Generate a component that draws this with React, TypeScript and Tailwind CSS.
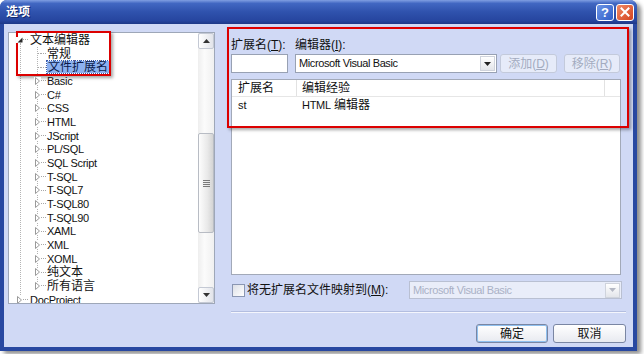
import React from 'react';

const kids = ['Basic', 'C#', 'CSS', 'HTML', 'JScript', 'PL/SQL', 'SQL Script', 'T-SQL', 'T-SQL7', 'T-SQL80', 'T-SQL90', 'XAML', 'XML', 'XOML', '纯文本', '所有语言'];

type Item = { t: string; lvl: 0 | 1; exp?: 'open' | 'closed'; sel?: boolean };

const items: Item[] = [
  { t: '文本编辑器', lvl: 0, exp: 'open' },
  { t: '常规', lvl: 1 },
  { t: '文件扩展名', lvl: 1, sel: true },
  ...kids.map((k) => ({ t: k, lvl: 1 as const, exp: 'closed' as const })),
  { t: 'DocProject', lvl: 0, exp: 'closed' },
];

const isCJK = (s: string) => /[\u4e00-\u9fff]/.test(s);

function Tri({ open }: { open?: boolean }) {
  return open ? (
    <svg width="6" height="6" viewBox="0 0 6 6">
      <path d="M5.5 0.5 L5.5 5.5 L0.5 5.5 Z" fill="#2a2a2a" />
    </svg>
  ) : (
    <svg width="5" height="8" viewBox="0 0 5 8">
      <path d="M0.5 0.5 L4.5 4 L0.5 7.5 Z" fill="white" stroke="#9a9a9a" strokeWidth="1" />
    </svg>
  );
}

function Row({ it }: { it: Item }) {
  const cjk = isCJK(it.t);
  return (
    <div className={`flex items-center h-[13.68px] shrink-0 ${it.lvl === 0 ? 'pl-[7px]' : 'pl-[25px]'}`}>
      <span className="w-[7px] h-full flex items-center justify-end relative z-10">
        {it.exp ? (
          <span className="w-[7px] flex items-center justify-center bg-white">
            <Tri open={it.exp === 'open'} />
          </span>
        ) : (
          <span className="w-[3px] border-t border-dotted border-[#a8a8a8]" />
        )}
      </span>
      <span className="w-[5px] border-t border-dotted border-[#a8a8a8]" />
      <span
        className={`whitespace-nowrap leading-[12px] ${it.lvl === 0 ? 'ml-[2px]' : 'ml-[1px]'} ${
          cjk ? 'text-[12px]' : 'text-[11px] tracking-[-0.3px]'
        } ${it.sel ? 'bg-[#8cb1f0] outline outline-1 outline-dotted outline-[#3b5aa8] px-[1px] text-[#0b1a4a]' : 'text-[#111]'}`}
      >
        {it.t}
      </span>
    </div>
  );
}

function ScrollArrow({ up }: { up?: boolean }) {
  return (
    <div className="h-[16px] w-[16px] shrink-0 flex items-center justify-center border border-[#c4c9d4] rounded-[2px] bg-[linear-gradient(to_right,#ffffff,#e2e4ea)]">
      <svg width="7" height="4" viewBox="0 0 7 4">
        {up ? <path d="M0 4 L3.5 0 L7 4 Z" fill="#333" /> : <path d="M0 0 L3.5 4 L7 0 Z" fill="#333" />}
      </svg>
    </div>
  );
}

function Tree() {
  return (
    <div className="w-[207px] h-[272px] border border-[#9ea7b8] bg-white flex shrink-0">
      <div className="flex-1 relative overflow-hidden">
        <div className="absolute left-[11px] top-[10px] bottom-0 border-l border-dotted border-[#b4b4b4]" />
        <div className="absolute left-[28px] top-[14px] h-[239px] border-l border-dotted border-[#b4b4b4]" />
        <div className="flex flex-col relative">
          {items.map((it, i) => (
            <Row key={i} it={it} />
          ))}
        </div>
      </div>
      <div className="w-[16px] flex flex-col bg-[linear-gradient(to_right,#eeeeee,#fbfbfb_40%,#f0f0f0)]">
        <ScrollArrow up />
        <div className="flex-1 relative flex flex-col">
          <div className="mt-[84px] h-[100px] w-[16px] border border-[#b8bcc4] rounded-[2px] bg-[linear-gradient(to_right,#fdfdfd,#e9e9e9_60%,#d4d4d4)] flex flex-col items-center justify-center gap-[1px]">
            <div className="w-[7px] h-[1px] bg-[#7a7a7a]" />
            <div className="w-[7px] h-[1px] bg-[#7a7a7a]" />
            <div className="w-[7px] h-[1px] bg-[#7a7a7a]" />
            <div className="w-[7px] h-[1px] bg-[#7a7a7a]" />
          </div>
        </div>
        <ScrollArrow />
      </div>
    </div>
  );
}

function DropBtn({ disabled }: { disabled?: boolean }) {
  return (
    <div className="w-[15px] h-[15px] mr-[1px] shrink-0 flex items-center justify-center border border-[#cfd3dc] bg-[linear-gradient(to_bottom,#ffffff,#e3e5ea)]">
      <svg width="7" height="4" viewBox="0 0 7 4">
        <path d="M0 0 L3.5 4 L7 0 Z" fill={disabled ? '#b4b8c4' : '#222'} />
      </svg>
    </div>
  );
}

function Right() {
  return (
    <div className="ml-[16px] w-[395px] flex flex-col pt-[6px]">
      <div className="flex h-[14px] items-center text-[12px] text-[#111]">
        <span className="w-[64px]">
          扩展名(<span className="underline">T</span>):
        </span>
        <span>
          编辑器(<span className="underline">I</span>):
        </span>
      </div>
      <div className="mt-[2px] flex h-[19px]">
        <div className="w-[57px] h-[19px] border border-[#98a1b3] bg-white" />
        <div className="ml-[7px] w-[202px] h-[19px] border border-[#98a1b3] bg-white flex items-center">
          <span className="flex-1 pl-[3px] text-[11px] tracking-[-0.4px] text-[#111]">Microsoft Visual Basic</span>
          <DropBtn />
        </div>
        <div className="ml-[3px] w-[57px] h-[19px] border border-[#c3cadb] rounded-[3px] bg-[#e6ebf9] flex items-center justify-center text-[12px] text-[#a3abc0]">
          添加(<span className="underline">D</span>)
        </div>
        <div className="ml-[7px] w-[56px] h-[19px] border border-[#c3cadb] rounded-[3px] bg-[#e6ebf9] flex items-center justify-center text-[12px] text-[#a3abc0]">
          移除(<span className="underline">R</span>)
        </div>
      </div>
      <div className="mt-[6px] w-[390px] h-[196px] border border-[#a2a9b8] bg-white flex flex-col">
        <div className="h-[17px] flex border-b border-[#e6e6e6] text-[12px] text-[#111]">
          <div className="w-[65px] pl-[6px] border-r border-[#e2e2e2] flex items-center">扩展名</div>
          <div className="w-[308px] pl-[5px] border-r border-[#e2e2e2] flex items-center">编辑经验</div>
          <div className="flex-1" />
        </div>
        <div className="h-[16px] flex items-center text-[#111]">
          <div className="w-[65px] pl-[6px] text-[11px]">st</div>
          <div className="pl-[5px] text-[12px]">
            <span className="text-[11px] tracking-[-0.3px]">HTML</span> 编辑器
          </div>
        </div>
      </div>
      <div className="mt-[6px] h-[18px] flex items-center">
        <div className="w-[13px] h-[13px] ml-[1px] border border-[#8a96b2] bg-[linear-gradient(135deg,#dcdfe6,#ffffff)]" />
        <span className="ml-[2px] text-[12px] text-[#111]">
          将无扩展名文件映射到(<span className="underline">M</span>):
        </span>
        <div className="ml-auto mr-[4px] w-[213px] h-[18px] border border-[#b9c0d2] bg-[#e9edf9] flex items-center">
          <span className="flex-1 pl-[3px] text-[11px] tracking-[-0.4px] text-[#aab1c6]">Microsoft Visual Basic</span>
          <DropBtn disabled />
        </div>
      </div>
      <div className="mt-[12px] h-[2px] border-t border-[#b3bee0] border-b border-b-[#f4f6fd]" />
      <div className="mt-[11px] flex justify-end gap-[5px]">
        <div className="w-[72px] h-[19px] rounded-[3px] border border-[#7a86a3] bg-[linear-gradient(to_bottom,#ffffff,#e8eaf0)] shadow-[inset_0_0_0_1px_#8fc0ef] flex items-center justify-center text-[12px] text-[#111]">
          确定
        </div>
        <div className="w-[73px] h-[19px] rounded-[3px] border border-[#7a86a3] bg-[linear-gradient(to_bottom,#ffffff,#e8eaf0)] flex items-center justify-center text-[12px] text-[#111]">
          取消
        </div>
      </div>
    </div>
  );
}

function TitleBar() {
  return (
    <div className="h-[24px] shrink-0 flex items-center rounded-t-[7px] bg-[linear-gradient(to_bottom,#809fe2_0%,#4167c2_14%,#2f52ad_50%,#26459f_86%,#1d3887_100%)]">
      <span className="ml-[6px] text-[12px] font-bold text-white [text-shadow:1px_1px_0_#12286a]">选项</span>
      <div className="ml-auto mr-[3px] flex gap-[2px]">
        <div className="w-[18px] h-[17px] rounded-[3px] border border-white bg-[linear-gradient(135deg,#6d95e6,#2f5dc8)] flex items-center justify-center text-white text-[13px] font-bold leading-none">
          ?
        </div>
        <div className="w-[18px] h-[17px] rounded-[3px] border border-white bg-[linear-gradient(135deg,#f08a65,#d4431f)] flex items-center justify-center">
          <svg width="10" height="10" viewBox="0 0 10 10">
            <path d="M1.5 1.5 L8.5 8.5 M8.5 1.5 L1.5 8.5" stroke="white" strokeWidth="2" strokeLinecap="square" />
          </svg>
        </div>
      </div>
    </div>
  );
}

export default function App() {
  return (
    <div className="w-[644px] h-[354px] bg-white overflow-hidden relative font-['Liberation_Sans','Noto_Sans_CJK_SC',sans-serif] text-[12px]">
      <div className="w-[637px] h-[351px] flex flex-col rounded-t-[7px] bg-[#2848a1] shadow-[4px_3px_4px_rgba(0,0,0,0.45)]">
        <TitleBar />
        <div className="flex-1 mx-[4px] mb-[4px] bg-[#d0d9f5] flex pl-[4px] pt-[8px]">
          <Tree />
          <Right />
        </div>
      </div>
      <div className="absolute left-[16px] top-[31px] w-[95px] h-[45px] border-2 border-[#dc0000] shadow-[2px_2px_3px_rgba(0,0,0,0.35)] pointer-events-none" />
      <div className="absolute left-[227px] top-[27px] w-[402px] h-[101px] border-2 border-[#dc0000] shadow-[2px_2px_3px_rgba(0,0,0,0.35)] pointer-events-none" />
    </div>
  );
}
